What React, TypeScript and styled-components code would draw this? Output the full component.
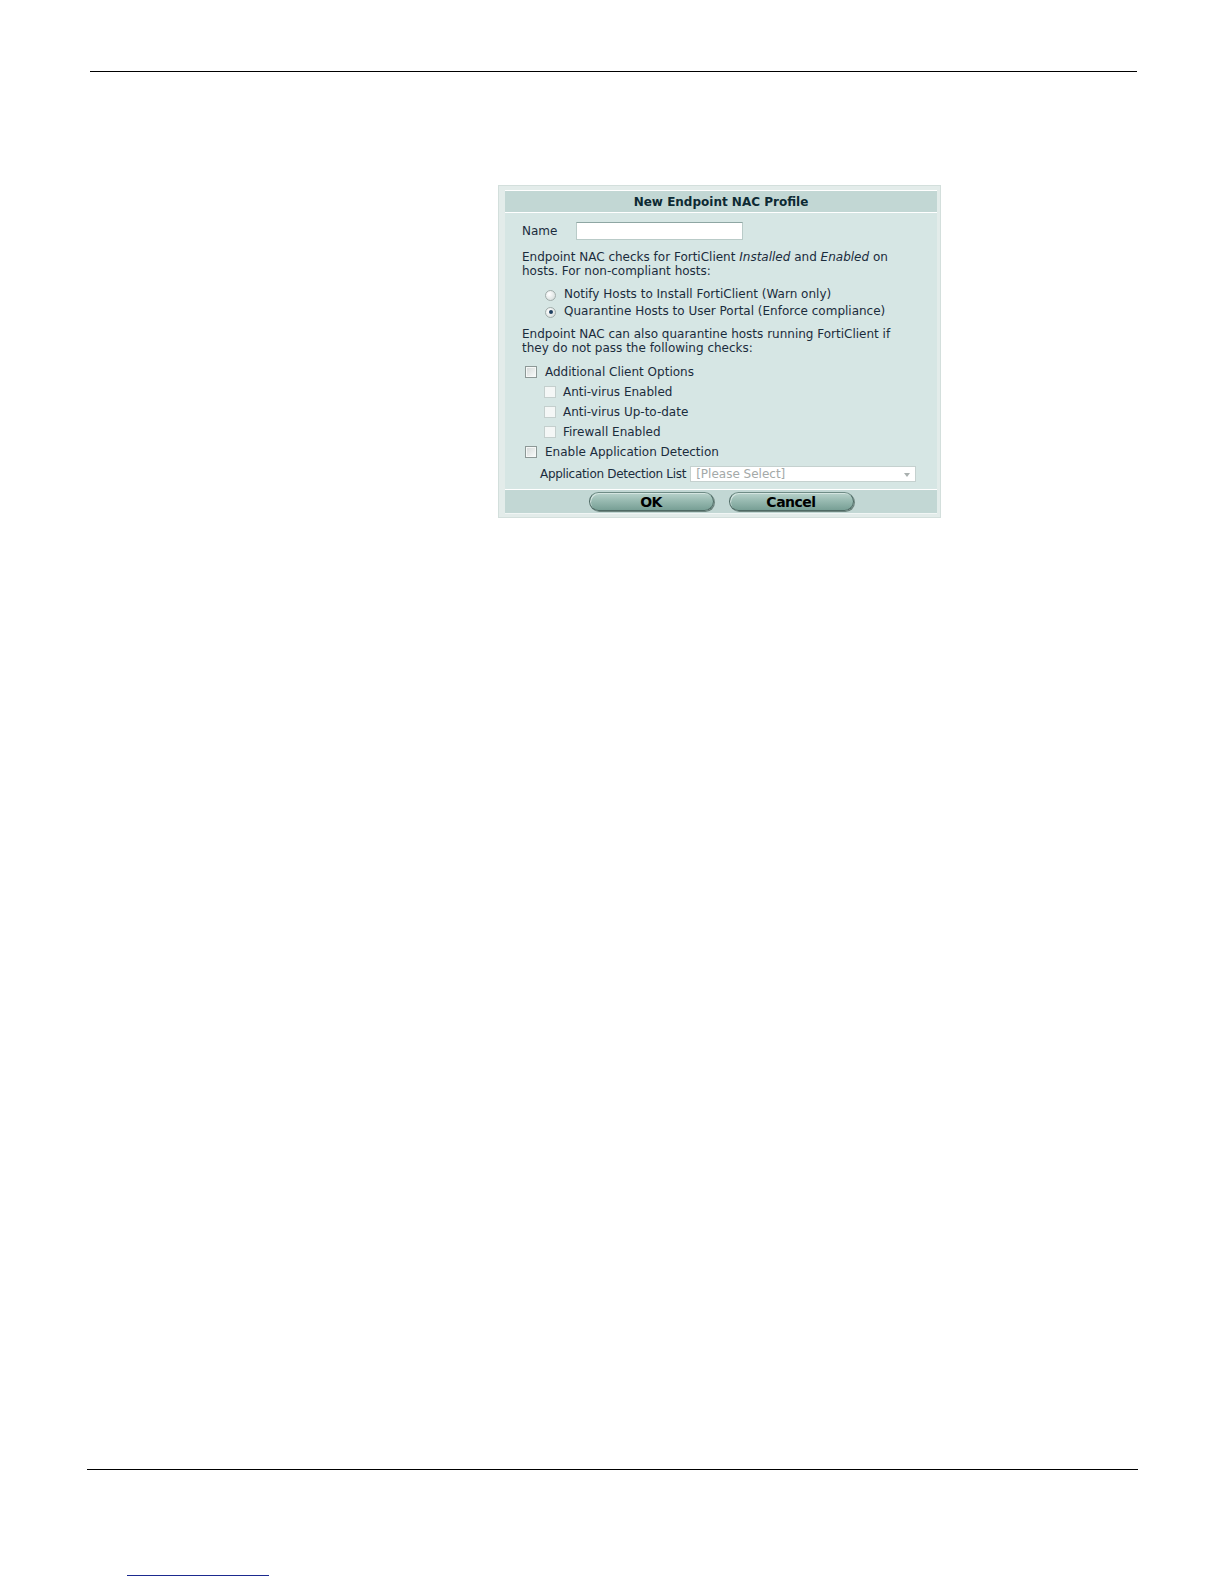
import React, { FC } from 'react';
import styled, { createGlobalStyle } from 'styled-components';

const GlobalStyle = createGlobalStyle`
  html, body {
    margin: 0;
    padding: 0;
    background: #fff;
    overflow: hidden;
  }
`;

const Page = styled.div`
  box-sizing: border-box;
  width: 1224px;
  height: 1584px;
  padding-top: 71px;
  display: flex;
  flex-direction: column;
  font-family: 'DejaVu Sans', Verdana, sans-serif;
`;

const Rule = styled.div<{ left: number; width: number }>`
  height: 1px;
  margin-left: ${(p) => p.left}px;
  width: ${(p) => p.width}px;
  background-color: #000;
`;

const Figure = styled.div`
  margin: 113px 0 0 498px;
  width: 443px;
  box-sizing: border-box;
  padding: 4px 3px 3px 6px;
  background-color: #e3ecea;
  border: solid 1px #d3dfdc;
`;

const Dialog = styled.div`
  background-color: #d6e6e4;
  border-top: solid 1px #fff;
  display: flex;
  flex-direction: column;
`;

const Header = styled.div`
  height: 19px;
  padding-top: 2px;
  line-height: 19px;
  background-color: #c2d7d4;
  border-bottom: solid 1px #fff;
  text-align: center;
  font-size: 12px;
  font-weight: bold;
  color: #0d2a33;
`;

const Body = styled.div`
  padding: 9px 15px 5px 17px;
  display: flex;
  flex-direction: column;
  font-size: 12px;
  color: #1b2c3c;
`;

const NameRow = styled.div`
  display: flex;
  align-items: center;
  height: 18px;
`;

const NameLabel = styled.span`
  width: 54px;
`;

const TextInput = styled.div`
  width: 167px;
  height: 18px;
  box-sizing: border-box;
  background-color: #fff;
  border: solid 1px #b9cbc8;
  border-top-color: #8ea6a3;
`;

const Para = styled.p<{ top: number }>`
  margin: ${(p) => p.top}px 0 0;
  line-height: 14px;
`;

const RadioList = styled.div`
  margin-top: 7px;
  display: flex;
  flex-direction: column;
`;

const OptionRow = styled.div<{ indent: number; gap: number; height: number }>`
  display: flex;
  align-items: center;
  height: ${(p) => p.height}px;
  padding-left: ${(p) => p.indent}px;
  gap: ${(p) => p.gap}px;
  white-space: nowrap;
`;

const Radio = styled.span<{ checked?: boolean }>`
  position: relative;
  flex-shrink: 0;
  width: 11px;
  height: 11px;
  margin-top: 3px;
  box-sizing: border-box;
  border-radius: 50%;
  border: solid 1px #a2adab;
  background: radial-gradient(circle at 35% 35%, #ffffff, #cfd8d6);
  &::after {
    content: '';
    display: ${(p) => (p.checked ? 'block' : 'none')};
    position: absolute;
    left: 2.5px;
    top: 2.5px;
    width: 4px;
    height: 4px;
    border-radius: 50%;
    background-color: #1f4060;
  }
`;

const CheckList = styled.div`
  margin-top: 7px;
  display: flex;
  flex-direction: column;
`;

const Checkbox = styled.span<{ disabled?: boolean }>`
  flex-shrink: 0;
  width: 12px;
  height: 12px;
  box-sizing: border-box;
  border: solid 1px ${(p) => (p.disabled ? '#c4cfcd' : '#8d9896')};
  background: ${(p) =>
    p.disabled
      ? '#f4f7f6'
      : 'linear-gradient(135deg, #d3d8d7 0%, #eef1f0 70%, #fbfbfb 100%)'};
  box-shadow: ${(p) => (p.disabled ? 'none' : 'inset 0 0 0 1px #f6f8f7')};
`;

const SelectRow = styled.div`
  display: flex;
  align-items: center;
  height: 21px;
  padding-top: 1px;
  padding-left: 18px;
  gap: 4px;
  white-space: nowrap;
`;

const SelectLabel = styled.span`
  letter-spacing: -0.3px;
`;

const Select = styled.div`
  position: relative;
  flex-shrink: 0;
  width: 226px;
  height: 16px;
  box-sizing: border-box;
  padding-left: 5px;
  line-height: 14px;
  background-color: #fff;
  border: solid 1px #c5d1cf;
  color: #a3a9a8;
  &::after {
    content: '';
    position: absolute;
    right: 5px;
    top: 6px;
    border-left: 3px solid transparent;
    border-right: 3px solid transparent;
    border-top: 4px solid #a9b0af;
  }
`;

const Footer = styled.div`
  height: 21px;
  border-top: solid 1px #fff;
  border-bottom: solid 1px #f1f6f5;
  background-color: #c2d7d4;
  display: flex;
  justify-content: center;
  align-items: flex-start;
  gap: 15px;
  padding-top: 2px;
`;

const Button = styled.button`
  width: 125px;
  height: 19px;
  padding: 1px 0 0;
  box-sizing: border-box;
  border-radius: 10px;
  border: solid 1px #4e6a64;
  border-top-color: #6f8c86;
  background: linear-gradient(180deg, #b9d2cc 0%, #98bab1 45%, #779f95 100%);
  box-shadow: inset 1px 1px 0 #d4e4e0, 1px 1px 0 #6e857f;
  font-family: 'DejaVu Sans', Verdana, sans-serif;
  font-size: 14px;
  font-weight: bold;
  letter-spacing: -0.5px;
  line-height: 17px;
  color: #000;
  overflow: hidden;
`;

const BottomBlock = styled.div`
  margin-top: auto;
  padding-bottom: 8px;
  display: flex;
  flex-direction: column;
`;

const LinkLine = styled.div`
  margin: 105px 0 0 127px;
  width: 142px;
  height: 1px;
  background-color: #1b2a8f;
`;

const App: FC = () => (
  <>
    <GlobalStyle />
    <Page>
      <Rule left={90} width={1047} />
      <Figure>
        <Dialog>
          <Header>New Endpoint NAC Profile</Header>
          <Body>
            <NameRow>
              <NameLabel>Name</NameLabel>
              <TextInput />
            </NameRow>
            <Para top={10}>
              Endpoint NAC checks for FortiClient <i>Installed</i> and <i>Enabled</i> on
              <br />
              hosts. For non-compliant hosts:
            </Para>
            <RadioList>
              <OptionRow indent={23} gap={8} height={17}>
                <Radio />
                Notify Hosts to Install FortiClient (Warn only)
              </OptionRow>
              <OptionRow indent={23} gap={8} height={17}>
                <Radio checked />
                Quarantine Hosts to User Portal (Enforce compliance)
              </OptionRow>
            </RadioList>
            <Para top={8}>
              Endpoint NAC can also quarantine hosts running FortiClient if
              <br />
              they do not pass the following checks:
            </Para>
            <CheckList>
              <OptionRow indent={3} gap={8} height={20}>
                <Checkbox />
                Additional Client Options
              </OptionRow>
              <OptionRow indent={22} gap={7} height={20}>
                <Checkbox disabled />
                Anti-virus Enabled
              </OptionRow>
              <OptionRow indent={22} gap={7} height={20}>
                <Checkbox disabled />
                Anti-virus Up-to-date
              </OptionRow>
              <OptionRow indent={22} gap={7} height={20}>
                <Checkbox disabled />
                Firewall Enabled
              </OptionRow>
              <OptionRow indent={3} gap={8} height={20}>
                <Checkbox />
                Enable Application Detection
              </OptionRow>
              <SelectRow>
                <SelectLabel>Application Detection List</SelectLabel>
                <Select>[Please Select]</Select>
              </SelectRow>
            </CheckList>
          </Body>
          <Footer>
            <Button>OK</Button>
            <Button>Cancel</Button>
          </Footer>
        </Dialog>
      </Figure>
      <BottomBlock>
        <Rule left={87} width={1051} />
        <LinkLine />
      </BottomBlock>
    </Page>
  </>
);

export default App;
